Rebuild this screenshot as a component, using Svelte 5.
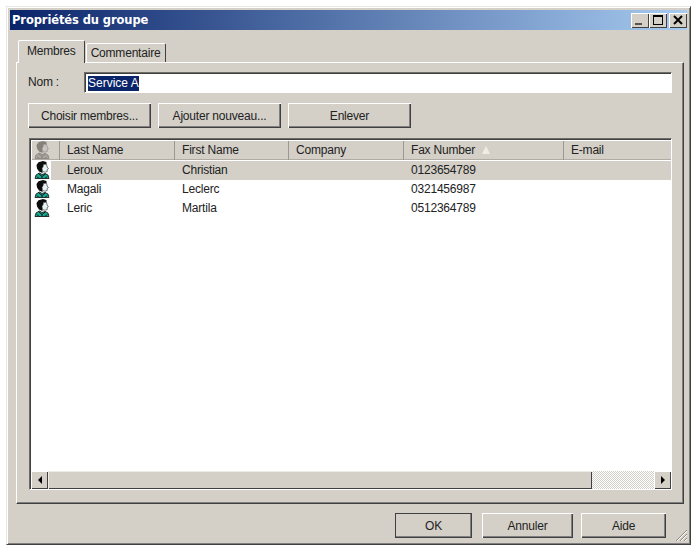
<script>
  const columns = [
    { label: "Last Name", width: 115 },
    { label: "First Name", width: 114 },
    { label: "Company", width: 115 },
    { label: "Fax Number", width: 160, sorted: true },
    { label: "E-mail", width: 108 }
  ];

  const rows = [
    { last: "Leroux", first: "Christian", company: "", fax: "0123654789", selected: true },
    { last: "Magali", first: "Leclerc", company: "", fax: "0321456987" },
    { last: "Leric", first: "Martila", company: "", fax: "0512364789" }
  ];
</script>

{#snippet person(muted)}
  <svg class="person" class:muted viewBox="0 0 16 18" width="16" height="18" aria-hidden="true">
    <path class="shirt" d="M1 17.5 L2 14 L5.5 12 L8 13.5 L11 12.5 L14 14 L15 17.5 Z" />
    <path class="hair" d="M2.5 4 L4.5 1.2 L9 0 L12.5 1 L12.5 3.2 L9.5 3.6 L9 6 L8 7.2 L8.4 10 L8.6 12 L5 10.5 L3 7.5 Z" />
    <path class="face" d="M9.5 3.6 L12.5 3.2 L13.2 6 L14.4 7.8 L13.2 8.6 L13.2 10.6 L11 11.2 L8.6 10.6 L8 7.2 L9 6 Z" />
    <path class="line" d="M4.5 12.5 L8 15.5 L11.5 12.8 M8 15.5 L8 17.5 M3 15.5 L5 17.5 M13 15.5 L11 17.5" />
  </svg>
{/snippet}

<div class="window">
  <div class="titlebar">
    <span class="title">Propriétés du groupe</span>
    <div class="controls">
      <button class="ctl" aria-label="Réduire">
        <svg viewBox="0 0 18 15" width="18" height="15"><rect x="4" y="10" width="7" height="2" fill="#555" /></svg>
      </button>
      <button class="ctl" aria-label="Agrandir">
        <svg viewBox="0 0 18 15" width="18" height="15"><path d="M4 2h10v10H4z M5 4v7h8V4z" fill-rule="evenodd" /></svg>
      </button>
      <button class="ctl close" aria-label="Fermer">
        <svg viewBox="0 0 18 15" width="18" height="15"><path d="M5 3 L13 11 M13 3 L5 11" stroke="#000" stroke-width="2" fill="none" /></svg>
      </button>
    </div>
  </div>

  <div class="content">
    <div class="tabs">
      <div class="tab active">Membres</div>
      <div class="tab">Commentaire</div>
    </div>

    <div class="panel">
      <div class="name-row">
        <label for="nom">Nom :</label>
        <div class="field" id="nom"><span class="sel">Service A</span></div>
      </div>

      <div class="actions">
        <button class="btn">Choisir membres...</button>
        <button class="btn">Ajouter nouveau...</button>
        <button class="btn">Enlever</button>
      </div>

      <div class="list">
        <div class="head">
          <div class="head-icon">{@render person(true)}</div>
          {#each columns as col}
            <div class="head-cell" style="width: {col.width}px">
              {col.label}
              {#if col.sorted}<span class="arrow"></span>{/if}
            </div>
          {/each}
        </div>

        <div class="rows">
          {#each rows as row}
            <div class="row">
              <div class="row-icon">{@render person(false)}</div>
              <div class="cells" class:selected={row.selected}>
                <div class="cell c1">{row.last}</div>
                <div class="cell c2">{row.first}</div>
                <div class="cell c3">{row.company}</div>
                <div class="cell c4">{row.fax}</div>
              </div>
            </div>
          {/each}
        </div>

        <div class="hscroll">
          <div class="sb-btn"><span class="tri left"></span></div>
          <div class="thumb"></div>
          <div class="track"></div>
          <div class="sb-btn"><span class="tri right"></span></div>
        </div>
      </div>
    </div>

    <div class="footer">
      <button class="btn ok">OK</button>
      <button class="btn annuler">Annuler</button>
      <button class="btn aide">Aide</button>
    </div>
  </div>

  <svg class="grip" viewBox="0 0 14 14" width="14" height="14" aria-hidden="true">
    <path d="M13 2 L2 13 M13 6 L6 13 M13 10 L10 13" stroke="#8a8880" stroke-width="1" fill="none" />
    <path d="M13 3 L3 13 M13 7 L7 13 M13 11 L11 13" stroke="#fff" stroke-width="1" fill="none" />
  </svg>
</div>

<style>
  :global(body) {
    background: #fff;
    font-family: "Liberation Sans", Arial, sans-serif;
    font-size: 12px;
    color: #222;
  }

  .window {
    position: relative;
    box-sizing: border-box;
    width: 685px;
    height: 539px;
    margin: 6px 0 0 6px;
    padding: 3px;
    display: flex;
    flex-direction: column;
    background: #d4d0c8;
    border: 1px solid;
    border-color: #e8e6e0 #404040 #404040 #e8e6e0;
    box-shadow: inset 1px 1px 0 #fff, inset -1px -1px 0 #808080;
  }

  .titlebar {
    flex: none;
    height: 20px;
    display: flex;
    align-items: center;
    justify-content: space-between;
    padding: 0 0 0 2px;
    background: linear-gradient(90deg, #0a246a, #a6caf0);
  }

  .title {
    color: #fff;
    font-family: "DejaVu Sans", sans-serif;
    font-weight: 700;
    font-size: 11.5px;
    letter-spacing: -0.1px;
  }

  .controls {
    display: flex;
  }

  .ctl {
    width: 18px;
    height: 15px;
    padding: 0;
    background: #d4d0c8;
    border: none;
    box-shadow: inset 1px 1px 0 #fff, inset -1px -1px 0 #404040;
  }

  .ctl svg {
    display: block;
  }

  .ctl.close {
    margin-left: 2px;
  }

  .content {
    flex: 1;
    display: flex;
    flex-direction: column;
    padding: 10px 3px 0 6px;
    min-height: 0;
  }

  .tabs {
    display: flex;
    align-items: flex-end;
    height: 22px;
    padding-left: 2px;
    position: relative;
    z-index: 1;
  }

  .tab {
    height: 18px;
    line-height: 18px;
    padding: 0 5px 0 4px;
    background: #d4d0c8;
    border-top: 1px solid #fff;
    border-left: 1px solid #fff;
    border-right: 1px solid #404040;
    border-radius: 2px 2px 0 0;
    letter-spacing: -0.2px;
  }

  .tab.active {
    height: 22px;
    line-height: 21px;
    padding: 0 8px;
    margin-bottom: -1px;
    margin-right: 1px;
  }

  .panel {
    box-sizing: border-box;
    height: 442px;
    padding: 8px 11px 0 11px;
    border: 1px solid;
    border-color: #fff #404040 #404040 #fff;
    box-shadow: inset -1px -1px 0 #808080;
  }

  .name-row {
    display: flex;
    align-items: center;
    height: 22px;
  }

  label {
    width: 56px;
    flex: none;
    letter-spacing: -0.2px;
  }

  .field {
    flex: 1;
    box-sizing: border-box;
    height: 21px;
    background: #fff;
    border: 1px solid;
    border-color: #6e6c66 #fff #fff #6e6c66;
    box-shadow: inset 1px 1px 0 #404040;
    padding: 3px 0 0 3px;
    line-height: 14px;
  }

  .sel {
    display: inline-block;
    background: #0a246a;
    color: #fff;
    line-height: 15px;
  }

  .actions {
    display: flex;
    gap: 7px;
    margin-top: 10px;
  }

  .btn {
    width: 123px;
    height: 25px;
    padding: 0;
    background: #d4d0c8;
    font: inherit;
    color: #222;
    letter-spacing: -0.2px;
    border: none;
    box-shadow: inset 1px 1px 0 #fff, inset -1px -1px 0 #404040, inset -2px -2px 0 #808080;
  }

  .list {
    box-sizing: border-box;
    display: flex;
    flex-direction: column;
    height: 352px;
    margin: 10px 0 0 1px;
    width: 643px;
    background: #fff;
    border: 1px solid;
    border-color: #6e6c66 #fff #fff #6e6c66;
    box-shadow: inset 1px 1px 0 #404040;
    padding: 2px 0 0 2px;
  }

  .head {
    flex: none;
    display: flex;
    height: 19px;
    overflow: hidden;
    background: #d4d0c8;
    box-shadow: inset 0 -1px 0 #b0aca4;
  }

  .head-icon {
    box-sizing: border-box;
    flex: none;
    width: 27px;
    padding-left: 2px;
    overflow: hidden;
  }

  .head-cell {
    box-sizing: border-box;
    flex: none;
    line-height: 19px;
    padding-left: 7px;
    border-left: 1px solid #9c9890;
    white-space: nowrap;
    letter-spacing: -0.2px;
  }

  .arrow {
    display: inline-block;
    margin-left: 4px;
    width: 0;
    height: 0;
    border-left: 4px solid transparent;
    border-right: 4px solid transparent;
    border-bottom: 8px solid #eeece6;
  }

  .rows {
    flex: 1;
    min-height: 0;
    padding-top: 1px;
  }

  .row {
    display: flex;
    height: 19px;
  }

  .row-icon {
    flex: none;
    width: 19px;
    padding-left: 2px;
    box-sizing: border-box;
  }

  .cells {
    flex: 1;
    display: flex;
    line-height: 19px;
    letter-spacing: -0.2px;
  }

  .cells.selected {
    background: #d4d0c8;
  }

  .cell {
    box-sizing: border-box;
    flex: none;
  }

  .c1 { width: 123px; padding-left: 16px; }
  .c2 { width: 114px; padding-left: 8px; }
  .c3 { width: 115px; padding-left: 8px; }
  .c4 { width: 160px; padding-left: 8px; }

  .hscroll {
    flex: none;
    display: flex;
    height: 18px;
    margin-left: -1px;
  }

  .sb-btn {
    box-sizing: border-box;
    flex: none;
    width: 17px;
    height: 18px;
    display: flex;
    align-items: center;
    justify-content: center;
    background: #d4d0c8;
    box-shadow: inset 1px 1px 0 #fff, inset -1px -1px 0 #404040;
  }

  .thumb {
    flex: none;
    width: 544px;
    background: #d4d0c8;
    box-shadow: inset 1px 1px 0 #eeece6, inset -1px -1px 0 #404040;
  }

  .track {
    flex: 1;
    background: repeating-conic-gradient(#d4d0c8 0 25%, #fff 0 50%) 0 0 / 2px 2px;
  }

  .tri {
    width: 0;
    height: 0;
    border-top: 4px solid transparent;
    border-bottom: 4px solid transparent;
  }

  .tri.left {
    border-right: 4px solid #000;
  }

  .tri.right {
    border-left: 4px solid #000;
  }

  .footer {
    display: flex;
    margin-top: 9px;
    padding-left: 379px;
  }

  .footer .btn {
    height: 25px;
  }

  .ok {
    width: 77px;
    outline: 1px solid #404040;
    outline-offset: -1px;
  }

  .annuler {
    width: 91px;
    margin-left: 10px;
  }

  .aide {
    width: 85px;
    margin-left: 8px;
  }

  .grip {
    position: absolute;
    right: 2px;
    bottom: 2px;
  }

  .person .hair { fill: #0c0c0c; }
  .person .face { fill: #e6f2f2; stroke: #222; stroke-width: 0.6; }
  .person .shirt { fill: #18a890; stroke: #0c0c0c; stroke-width: 0.8; }
  .person .line { fill: none; stroke: #0c0c0c; stroke-width: 1; }

  .person.muted .hair { fill: #85827c; }
  .person.muted .face { fill: #c8c5be; stroke: #85827c; }
  .person.muted .shirt { fill: #aaa79f; stroke: #85827c; }
  .person.muted .line { stroke: #85827c; }
</style>
